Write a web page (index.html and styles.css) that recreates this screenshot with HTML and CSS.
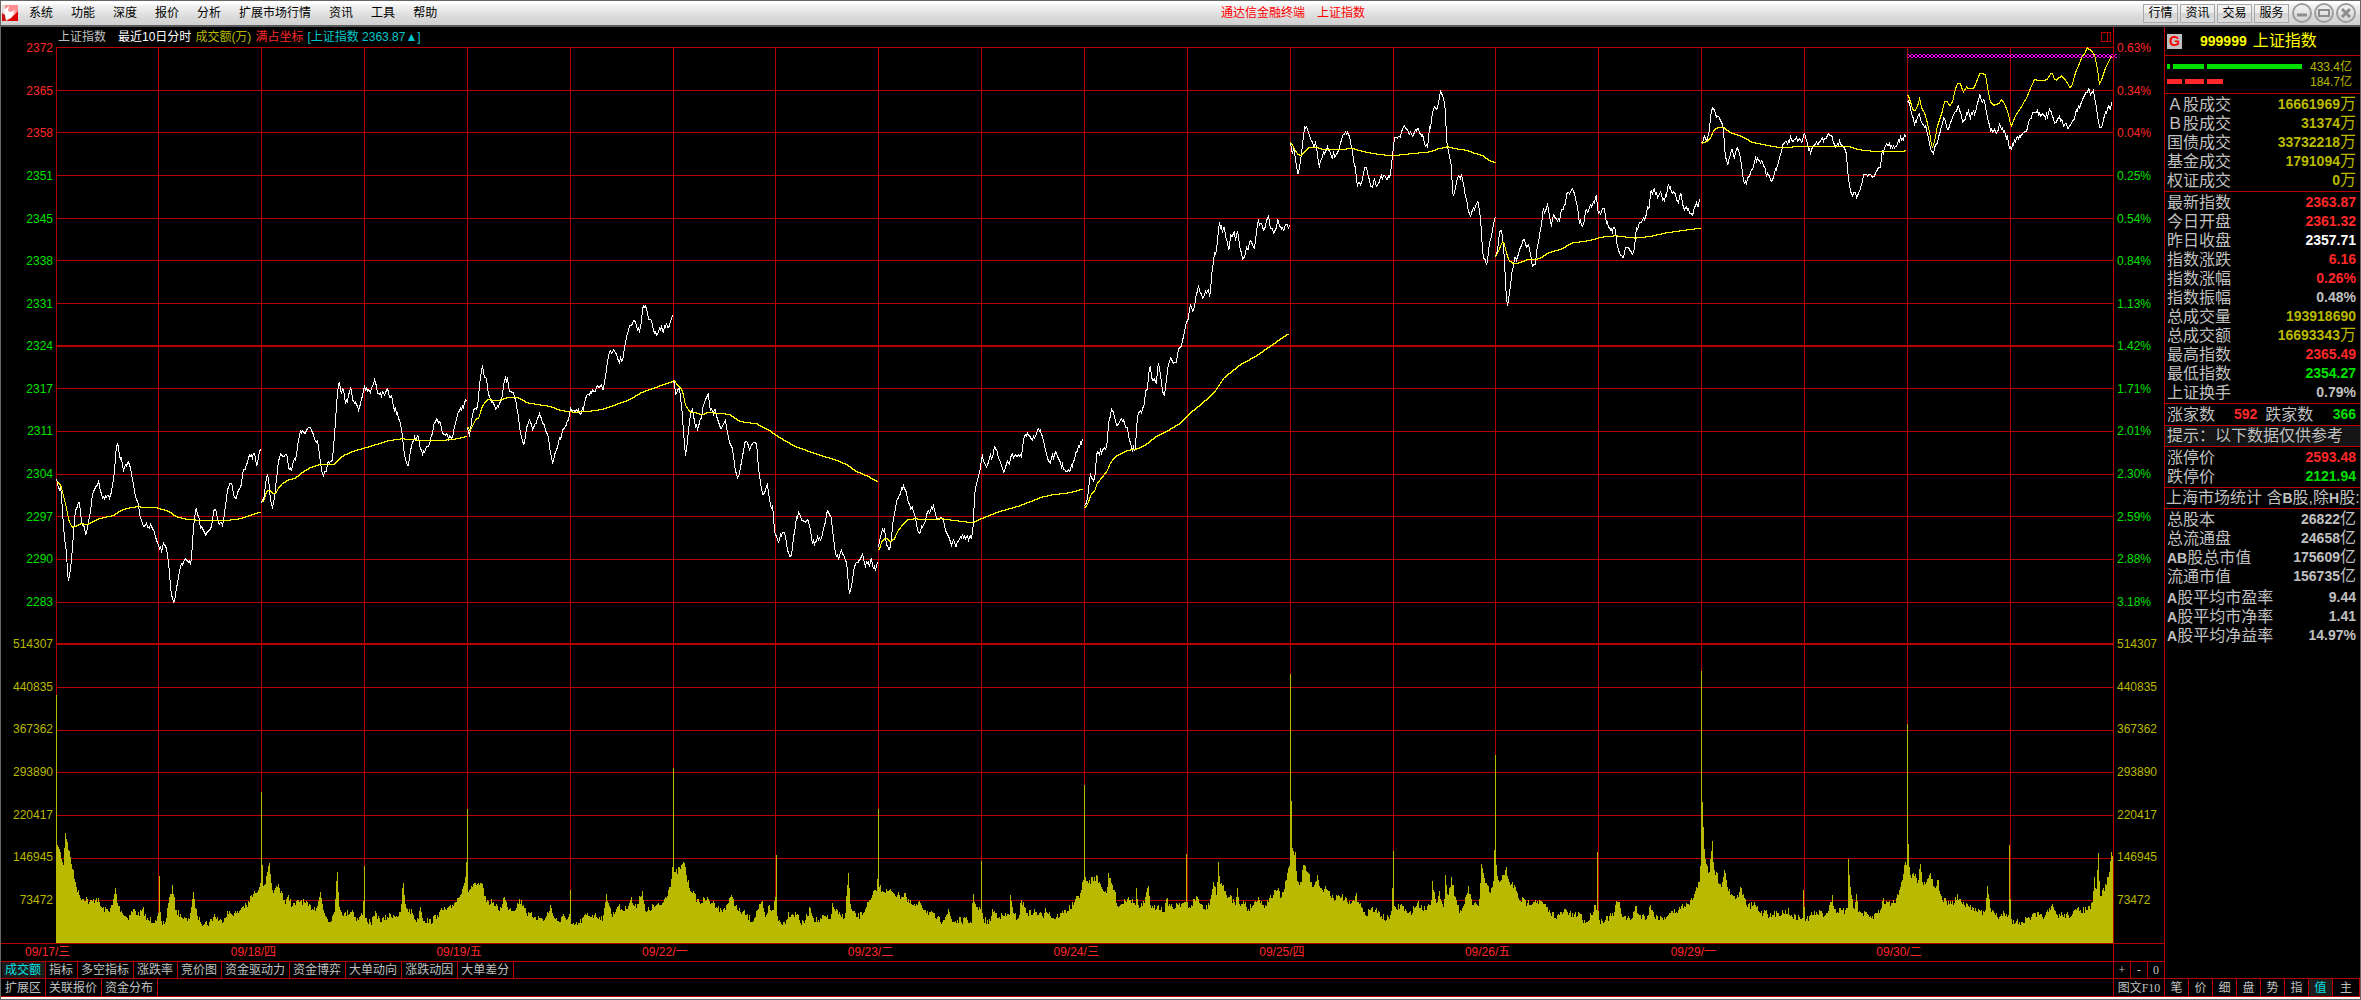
FILE: index.html
```html
<!DOCTYPE html>
<html lang="zh-CN">
<head>
<meta charset="utf-8">
<title>通达信金融终端 上证指数</title>
<link rel="stylesheet" href="styles.css">
</head>
<body>
<header class="titlebar">
  <svg class="logo" viewBox="0 0 16 16" aria-hidden="true"><rect width="16" height="16" fill="#e8dede"/><path d="M3 0h13v6l-5 3-4-2-4 3z" fill="#ff8f8f"/><path d="M16 6v10H4l5-3z" fill="#e00000"/><path d="M0 8l3 2 1 6H0z" fill="#d01010"/><path d="M2 5l5-4-1 5 3 1 4-2-4 8-5 1z" fill="#fff"/></svg>
  <nav class="menu">
    <button>系统</button><button>功能</button><button>深度</button><button>报价</button><button>分析</button><button>扩展市场行情</button><button>资讯</button><button>工具</button><button>帮助</button>
  </nav>
  <h1 class="caption"><span>通达信金融终端</span><span>上证指数</span></h1>
  <div class="shortcuts"><button>行情</button><button>资讯</button><button>交易</button><button>服务</button></div>
  <div class="window-buttons">
    <button aria-label="最小化"><svg viewBox="0 0 20 20"><circle cx="10" cy="10" r="9"/><path d="M5 12h10" class="bold"/></svg></button>
    <button aria-label="还原"><svg viewBox="0 0 20 20"><circle cx="10" cy="10" r="9"/><path d="M5 7h10v6H5z"/></svg></button>
    <button aria-label="关闭"><svg viewBox="0 0 20 20"><circle cx="10" cy="10" r="9"/><path d="M6 6l8 8M14 6l-8 8" class="bold"/></svg></button>
  </div>
</header>
<main class="desk">
  <section class="workspace">
    <div class="chart">
      <ol class="axis axis-left">
        <li class="up">2372</li><li class="up">2365</li><li class="up">2358</li><li class="down">2351</li><li class="down">2345</li><li class="down">2338</li><li class="down">2331</li><li class="down">2324</li><li class="down">2317</li><li class="down">2311</li><li class="down">2304</li><li class="down">2297</li><li class="down">2290</li><li class="down">2283</li><li>514307</li><li>440835</li><li>367362</li><li>293890</li><li>220417</li><li>146945</li><li>73472</li>
      </ol>
      <div class="plot">
        <div class="legend">
          <span class="name">上证指数</span><span class="period">最近10日分时</span><span class="amount">成交额(万)</span><span class="up">满占坐标</span><span class="quote-tag">[上证指数 2363.87▲]</span>
          <svg class="layout-icon" viewBox="0 0 10 10" aria-hidden="true"><path d="M.5 .5h9v9h-9zM6.500 .5v9"/></svg>
        </div>
        <svg id="canvas" class="canvas" viewBox="56 47 2057 896" preserveAspectRatio="none" role="img" aria-label="最近10日分时走势">
          <defs><pattern id="cross" width="4" height="4" patternUnits="userSpaceOnUse" x="1908" y="54"><path d="M0 0h1v1H0zM3 0h1v1H3zM1 1h2v2H1zM0 3h1v1H0zM3 3h1v1H3z" fill="#ff00ff"/></pattern></defs>
        </svg>
      </div>
      <ol class="axis axis-right">
        <li class="up">0.63%</li><li class="up">0.34%</li><li class="up">0.04%</li><li class="down">0.25%</li><li class="down">0.54%</li><li class="down">0.84%</li><li class="down">1.13%</li><li class="down">1.42%</li><li class="down">1.71%</li><li class="down">2.01%</li><li class="down">2.30%</li><li class="down">2.59%</li><li class="down">2.88%</li><li class="down">3.18%</li><li>514307</li><li>440835</li><li>367362</li><li>293890</li><li>220417</li><li>146945</li><li>73472</li>
      </ol>
    </div>
    <div class="strip dates">
      <ol class="strip-main"><li>09/17/三</li><li>09/18/四</li><li>09/19/五</li><li>09/22/一</li><li>09/23/二</li><li>09/24/三</li><li>09/25/四</li><li>09/26/五</li><li>09/29/一</li><li>09/30/二</li></ol>
      <div class="strip-side"></div>
    </div>
    <div class="strip tabs">
      <nav class="strip-main"><button class="active">成交额</button><button>指标</button><button>多空指标</button><button>涨跌率</button><button>竞价图</button><button>资金驱动力</button><button>资金博弈</button><button>大单动向</button><button>涨跌动因</button><button>大单差分</button></nav>
      <div class="strip-side zoomers"><button>+</button><button>-</button><button>0</button></div>
    </div>
    <div class="strip tabs last">
      <nav class="strip-main"><button>扩展区</button><button>关联报价</button><button>资金分布</button></nav>
      <div class="strip-side zoomers"><button class="info">图文F10</button></div>
    </div>
  </section>
  <aside class="quote">
    <h2 class="security"><span class="flag">G</span><span class="code">999999</span><span>上证指数</span></h2>
    <div class="flows block">
      <div class="flow green"><i class="seg s3"></i><i class="seg s31"></i><i class="seg s95"></i><span>433.4亿</span></div>
      <div class="flow red"><i class="seg s15"></i><i class="seg s19"></i><i class="seg s16"></i><span>184.7亿</span></div>
    </div>
    <div class="block">
    <table>
      <tr><th>Ａ股成交</th><td class="amount">16661969<em>万</em></td></tr>
      <tr><th>Ｂ股成交</th><td class="amount">31374<em>万</em></td></tr>
      <tr><th>国债成交</th><td class="amount">33732218<em>万</em></td></tr>
      <tr><th>基金成交</th><td class="amount">1791094<em>万</em></td></tr>
      <tr><th>权证成交</th><td class="amount">0<em>万</em></td></tr>
    </table>
    </div>
    <div class="block">
    <table>
      <tr><th>最新指数</th><td class="up">2363.87</td></tr>
      <tr><th>今日开盘</th><td class="up">2361.32</td></tr>
      <tr><th>昨日收盘</th><td class="flat">2357.71</td></tr>
      <tr><th>指数涨跌</th><td class="up">6.16</td></tr>
      <tr><th>指数涨幅</th><td class="up">0.26%</td></tr>
      <tr><th>指数振幅</th><td>0.48%</td></tr>
      <tr><th>总成交量</th><td class="amount">193918690</td></tr>
      <tr><th>总成交额</th><td class="amount">16693343<em>万</em></td></tr>
      <tr><th>最高指数</th><td class="up">2365.49</td></tr>
      <tr><th>最低指数</th><td class="down">2354.27</td></tr>
      <tr><th>上证换手</th><td>0.79%</td></tr>
    </table>
    </div>
    <div class="block">
    <table>
      <tr><th>涨家数</th><td class="up">592</td><th class="second">跌家数</th><td class="down">366</td></tr>
    </table>
    </div>
    <p class="block note">提示：以下数据仅供参考</p>
    <div class="block">
    <table>
      <tr><th>涨停价</th><td class="up">2593.48</td></tr>
      <tr><th>跌停价</th><td class="down">2121.94</td></tr>
    </table>
    </div>
    <h3 class="block market">上海市场统计 含<b>B</b>股,除<b>H</b>股:</h3>
    <div class="block totals">
    <table>
      <tr><th>总股本</th><td>26822<em>亿</em></td></tr>
      <tr><th>总流通盘</th><td>24658<em>亿</em></td></tr>
      <tr><th><b>AB</b>股总市值</th><td>175609<em>亿</em></td></tr>
      <tr><th>流通市值</th><td>156735<em>亿</em></td></tr>
    </table>
    <table>
      <tr><th><b>A</b>股平均市盈率</th><td>9.44</td></tr>
      <tr><th><b>A</b>股平均市净率</th><td>1.41</td></tr>
      <tr><th><b>A</b>股平均净益率</th><td>14.97%</td></tr>
    </table>
    </div>
    <nav class="views"><button>笔</button><button>价</button><button>细</button><button>盘</button><button>势</button><button>指</button><button class="active">值</button><button>主</button></nav>
  </aside>
</main>
<script src="chart.js"></script>
</body>
</html>
```

FILE: styles.css
```css
* { box-sizing: border-box; }

:root {
  --line: #b80000;
  --up: #ff2828;
  --down: #00e000;
  --amount: #b9b900;
  --text: #c0c0c0;
  --cyan: #00c8c8;
}

body {
  margin: 0;
  height: 100vh;
  display: flex;
  flex-direction: column;
  border: 1px solid #666;
  background: #000;
  color: var(--text);
  font: 12px/16px "Liberation Sans", "Noto Sans CJK SC", sans-serif;
}

h1, h2, h3, p, ol { margin: 0; padding: 0; font-size: inherit; font-weight: normal; list-style: none; }

button {
  margin: 0;
  padding: 0;
  border: 0;
  background: none;
  color: inherit;
  font: inherit;
  white-space: nowrap;
}

.up { color: var(--up); }
.down { color: var(--down); }
.amount { color: var(--amount); }
.flat { color: #fff; }

/* Title bar */
.titlebar {
  flex: none;
  height: 26px;
  display: flex;
  align-items: center;
  padding-left: 1px;
  border-bottom: 2px solid #5a5a5a;
  background: linear-gradient(#fff 0, #fff 3px, #f2f2f2 4px, #e8e8e8 10px, #dcdcdc 15px, #d0d0d0 24px);
  color: #000;
}
.logo { width: 16px; height: 16px; }
.menu { display: flex; gap: 18px; padding-left: 11px; }
.caption { flex: 1; display: flex; justify-content: center; gap: 12px; padding-left: 6px; color: #f00; }
.shortcuts { display: flex; gap: 2px; }
.shortcuts button {
  width: 35px;
  height: 19px;
  border: 1px solid #a8a8a8;
  background: linear-gradient(#f4f4f4, #ececec 45%, #d4d4d4 50%, #dcdcdc);
}
.window-buttons { display: flex; gap: 2px; padding: 0 4px 0 3px; }
.window-buttons button { width: 20px; height: 20px; }
.window-buttons svg { display: block; fill: none; stroke: #8c8c8c; stroke-width: 2; }
.window-buttons .bold { stroke-width: 3; }
.window-buttons circle { stroke: #9c9c9c; }

/* Chart area */
.desk { flex: 1; min-height: 0; display: flex; border-bottom: 2px solid #fff; }
.workspace { flex: 1; min-width: 0; display: flex; flex-direction: column; border-bottom: 1px solid var(--line); }
.chart { flex: 1; min-height: 0; display: grid; grid-template-columns: 55px 1fr 51px; }
.axis { display: grid; grid-template-rows: repeat(21, 1fr); align-items: center; padding-bottom: 22px; color: var(--amount); }
.axis-left { padding-right: 3px; text-align: right; }
.axis-right { padding-left: 3px; border-left: 1px solid var(--line); }
.plot { min-width: 0; min-height: 0; display: flex; flex-direction: column; }
.legend { flex: none; height: 20px; display: flex; align-items: center; gap: 4px; padding: 0 2px; }
.legend .name { padding-right: 8px; }
.legend .period { color: #fff; }
.quote-tag { color: var(--cyan); }
.layout-icon { width: 10px; height: 10px; margin-left: auto; fill: none; stroke: var(--line); shape-rendering: crispEdges; }
.canvas { display: block; width: 100%; flex: 1; min-height: 0; overflow: visible; shape-rendering: crispEdges; fill: none; }
.canvas path { vector-effect: non-scaling-stroke; }
.grid-line { stroke: var(--line); stroke-width: 1; }
.grid-line.major { stroke-width: 2; }
.price { stroke: #fff; }
.average { stroke: #ff0; }
.volume { fill: var(--amount); }

/* Strips under the chart */
.strip { flex: none; height: 17px; display: flex; border-top: 1px solid var(--line); }
.strip.dates, .strip.last { height: 18px; }
.strip-main { flex: 1; display: flex; }
.strip-side { width: 51px; border-left: 1px solid var(--line); }
.dates { color: var(--up); }
.dates .strip-main { padding: 0 31px 0 24px; }
.dates li { flex: 1; }
.tabs .strip-main { padding-left: 1px; }
.tabs .strip-main button { padding: 0 4px 0 3px; border-right: 1px solid var(--line); }
.tabs .active, .views .active { background: #1c1c1c; color: #00e0e0; }
.zoomers { display: flex; font-family: "Liberation Serif", "Noto Sans CJK SC", serif; }
.zoomers button { flex: 1; }
.zoomers button + button { border-left: 1px solid var(--line); }

/* Quote panel */
.quote {
  flex: none;
  width: 196px;
  display: flex;
  flex-direction: column;
  border-left: 1px solid var(--line);
  border-bottom: 1px solid var(--line);
  font-size: 16px;
  overflow: hidden;
}
.block { border-top: 1px solid var(--line); }
.security { height: 28px; display: flex; align-items: center; padding-left: 2px; color: #ff0; }
.security .flag { width: 15px; height: 15px; margin-right: 18px; background: #c0c0c0; color: #f00; font: bold 14px/15px "Liberation Sans", sans-serif; text-align: center; }
.security .code { margin-right: 6px; font-size: 14px; font-weight: bold; }
.flows { height: 38px; padding: 3px 8px 3px 2px; color: var(--amount); font-size: 12px; }
.flow { display: flex; align-items: center; gap: 3px; height: 15px; }
.flow span { margin-left: auto; }
.seg { height: 5px; }
.green .seg { background: var(--down); }
.red .seg { background: var(--up); }
.s3 { width: 3px; }
.s15 { width: 15px; }
.s16 { width: 16px; }
.s19 { width: 19px; }
.s31 { width: 31px; }
.s95 { width: 95px; }
.quote table { width: 100%; border-spacing: 0; margin: 1px 0; }
.quote tr { height: 19px; }
.quote th, .quote td { padding: 0; line-height: 19px; white-space: nowrap; }
.quote th { padding-left: 2px; font-weight: normal; text-align: left; }
.quote td { padding-right: 4px; font-size: 14px; font-weight: bold; text-align: right; }
.quote em { font-size: 16px; font-style: normal; font-weight: normal; line-height: 16px; }
.quote b { font-size: 14px; line-height: 14px; }
.note { height: 21px; padding-left: 2px; background: #141414; line-height: 20px; }
.market { height: 21px; padding-left: 1px; line-height: 20px; white-space: nowrap; }
.quote .second { padding-left: 4px; }
.totals { flex: 1; }
.totals table + table { margin-top: 2px; }
.views { flex: none; height: 18px; display: flex; border-top: 1px solid var(--line); font-size: 12px; }
.views button { width: 24px; border-right: 1px solid var(--line); }
.views button:last-child { flex: 1; }
```

FILE: chart.js
```js
// Ten-day intraday chart: each trace is a list of "x,y" samples with its own origin and scale.
const canvas = document.getElementById('canvas');
const NS = 'http://www.w3.org/2000/svg';

let seed = 7;
function random() {
  seed = (seed * 16807) % 2147483647;
  return seed / 2147483647 - 0.5;
}

function draw(className, d) {
  const path = document.createElementNS(NS, 'path');
  path.setAttribute('class', className);
  path.setAttribute('d', d);
  canvas.appendChild(path);
}

function parse(text, ox, oy, sx) {
  return text.trim().split(/\s+/).map(pair => {
    const [x, y] = pair.split(',').map(Number);
    return [ox + x / sx, oy + y / 3];
  });
}

function sample(points, x) {
  let i = 1;
  while (i < points.length - 1 && points[i][0] < x) i++;
  const [x0, y0] = points[i - 1], [x1, y1] = points[i];
  return y0 + (y1 - y0) * Math.min(1, Math.max(0, (x - x0) / (x1 - x0)));
}

function line(className, points, jitter) {
  const out = [];
  const end = points[points.length - 1][0];
  for (let x = Math.floor(points[0][0]); x <= end; x++) {
    out.push((x + 0.5) + ' ' + Math.round(sample(points, x) + random() * jitter));
  }
  draw(className, 'M' + out.join('L'));
}

for (let i = 0; i < 21; i++) {
  const y = 47 + Math.round(i * 42.67);
  if (i === 7 || i === 14) draw('grid-line major', 'M56 ' + y + 'H2113');
  else draw('grid-line', 'M56 ' + (y + 0.5) + 'H2113');
}
for (let i = 0; i < 20; i++) {
  draw('grid-line', 'M' + (Math.floor(56 + i * 102.85) + 0.5) + ' 47V943');
}

const A = [40, 380, 2.376], B = [640, 280, 2.376], C = [1200, 40, 3], D = [1680, 30, 3];

const volume = [
  ...parse(`111,235 112,675 118,697 124,740 128,640 132,665 138,712 145,765 150,800 158,835 170,835 175,850 190,835 200,865 210,872 220,860 227,805 230,850 240,880 250,895 262,868 270,885 282,870 287,900 305,900 311,890 313,768 315,915 325,905 330,850 338,802 345,870 355,890 370,905 379,823 383,865 392,905 410,910 420,885 433,905 445,880 465,880 475,860 485,860 490,835 500,820 511,790 513,515 515,800 522,780 528,735 532,800 537,820 545,795 553,820 560,855 566,825 572,860 590,840 605,860 620,865 628,818 634,870 645,905 655,880 661,757 665,860 675,885 690,870 700,900 712,880 714,738 716,895 727,910 737,880 745,905 765,885 785,885 790,790 795,860 808,880 818,905 824,860 828,895 843,905 858,885 868,870 880,870 890,850 900,830 910,790 914,770 916,567 918,815 925,800 940,795 948,805 952,840 965,850 980,870 988,832 995,860 1010,870 1018,840 1027,855 1035,885 1050,890 1068,900 1079,860 1087,895 1098,905 1105,890 1116,895 1118,810 1120,920 1135,910 1150,885 1165,885 1183,895 1189,823 1200,890 1210,860 1225,870 1237,835 1245,865 1259,812 1265,880 1280,860 1297,855 1305,830 1313,800 1318,760 1320,445 1322,765 1330,750 1342,730 1348,785 1358,820 1370,845 1385,840 1400,850 1415,875 1435,830 1445,870 1460,880 1475,905 1485,870 1495,850 1500,900 1507,860 1515,870 1520,835 1522,705 1524,900 1538,910 1545,880 1565,885`, 0, 620, 1.96),
  ...parse(`42,915 50,900 60,863 65,895 78,905 85,890 98,900 103,858 118,890 128,885 134,760 139,870 150,890 160,885 170,860 180,835 191,795 193,567 195,800 205,815 220,815 235,830 245,820 250,845 265,860 275,850 285,870 300,885 315,905 331,875 338,905 365,900 375,910 379,822 385,865 393,870 395,723 397,895 410,910 417,870 430,890 450,885 452,826 457,885 468,895 473,840 485,880 500,875 515,890 521,865 535,895 555,880 575,855 590,815 595,780 597,495 599,795 610,780 620,770 630,800 640,820 644,768 655,810 663,860 683,830 697,855 699,805 703,865 715,850 722,797 728,870 742,855 752,875 758,838 770,870 778,850 795,850 797,702 799,870 818,830 830,870 842,855 850,785 856,830 859,727 864,800 870,795 878,845 883,825 892,855 897,805 902,860 912,845 915,870 930,850 937,830 948,860 960,835 975,810 983,830 990,800 997,745 999,740 1001,162 1003,655 1006,700 1010,695 1013,770 1020,795 1027,735 1035,760 1045,800 1053,770 1063,815 1070,800 1085,835 1100,830 1118,855 1130,830 1137,850 1145,885 1160,865 1175,880 1188,900 1196,890 1200,850 1202,693 1204,870 1218,855 1232,885 1250,850 1265,870 1277,840 1279,784 1287,860 1293,820 1302,860 1304,765 1310,835 1316,772 1325,840 1336,885 1345,825 1350,805 1357,855 1370,860 1375,733 1382,790 1393,820 1400,775 1402,405 1404,740 1408,780 1420,770 1424,742 1428,785 1440,800 1448,835 1465,850 1480,840 1495,850 1510,880 1525,890 1540,870 1555,890 1566,880`, 780, 620, 1.96),
  ...parse(`52,880 60,900 70,908 82,885 92,855 96,870 98,697 101,905 125,895 143,880 148,843 155,855 165,890 185,900 199,860 207,885 228,890 237,855 245,885 265,895 290,880 310,870 330,850 345,840 358,805 367,770 370,153 373,665 375,625 378,700 390,760 398,663 403,750 412,770 420,800 430,750 438,800 450,825 460,835 474,805 483,840 490,860 510,855 525,880 540,870 547,890 570,880 597,873 607,890 634,895 637,810 640,905 655,885 680,877 695,885 712,832 718,870 751,875 754,717 760,810 768,870 774,823 780,875 800,885 815,895 828,880 838,870 842,843 865,850 878,840 890,800 902,725 906,750 908,312 911,720 917,770 925,760 935,790 942,733 947,785 957,785 968,760 978,800 990,785 994,830 1010,845 1030,850 1038,826 1050,850 1065,860 1085,865 1100,875 1110,885 1117,798 1125,870 1140,880 1146,900 1160,875 1172,885 1175,675 1178,905 1200,905 1220,900 1240,885 1265,890 1289,860 1297,885 1330,885 1355,870 1375,870 1392,855 1397,771 1401,835 1407,700 1411,830 1425,800 1435,760 1442,697 1445,735`, 1560, 620, 2.613)
];
let bars = 'M56 943';
for (let x = 56; x < 2113; x++) {
  let y = sample(volume, x + 0.5) + random() * 7;
  for (const [px, py] of volume) if (px >= x && px < x + 1) y = Math.min(y, py);
  bars += 'V' + Math.round(y) + 'H' + (x + 1);
}
draw('volume', bars + 'V943Z');

const prices = [
  parse(`39,300 42,318 48,325 52,390 55,440 58,485 62,520 64,580 67,600 71,570 75,520 79,440 83,395 87,375 93,366 97,420 103,440 108,462 113,430 118,405 123,350 128,320 138,310 145,345 151,360 158,345 164,355 172,310 178,240 179,195 183,187 188,225 193,240 197,266 206,255 212,250 218,300 224,340 232,375 238,410 244,447 249,425 255,445 263,435 270,455 276,480 282,500 289,512 294,487 300,515 306,575 310,640 317,673 322,630 326,610 330,570 337,550 343,535 350,545 357,555 362,480 365,420 369,382 376,410 381,445 386,450 392,472 398,455 406,440 411,400 415,382 421,420 432,430 436,420 440,370 446,320 450,304 455,320 459,350 464,360 470,330 477,315 481,280 488,260 494,235 500,225 503,235 507,205 510,240 515,255 519,220 525,205`, ...A),
  parse(`527,363 531,363 535,310 538,282 542,300 546,360 551,385 556,350 560,310 565,240 568,228 585,225 590,265 593,260 595,278 600,245 607,235 612,190 617,155 630,155 636,135 642,145 648,160 653,178 660,190 665,240 670,290 677,280 683,250 688,240 694,238 699,150 704,60 709,3 715,40 719,20 724,72 729,60 737,20 743,70 748,60 756,85 762,60 769,22 778,35 785,35 795,-3 801,35 808,38 816,45 824,22 829,45 834,50 840,80 849,105 856,130 862,190 866,240 873,258 879,210 884,180 890,175 896,165 903,205 909,220 917,205 925,185 931,160 937,118 944,128 951,130 957,165 963,165 970,175 979,175 985,130 992,100 998,88 1006,80 1013,55`, ...A),
  [...parse(`1015,150 1020,165 1027,100 1033,85 1040,75 1043,10 1047,-20 1050,-40 1054,-10 1060,5 1065,40 1070,60 1075,65 1082,88 1088,75 1095,60 1100,20 1105,-5 1110,-5 1113,40 1122,35 1130,60 1136,120 1141,170 1146,190 1152,180 1155,140 1161,120 1170,150 1178,125 1186,108 1192,125 1200,150 1206,160 1211,220 1216,245 1222,225 1228,205 1233,180 1240,160 1248,135 1256,115 1260,85 1268,92 1275,85 1283,100 1290,88 1296,45 1305,42 1315,32 1325,22 1332,20 1337,28 1341,0 1350,-80 1362,-95 1373,-58 1382,-60 1390,-110 1400,-165 1412,-180 1420,-150`, ...A), ...parse(`0,148 6,70 15,90 18,110 27,118 33,155 38,172 45,140 54,155 62,128 68,150 72,118 78,100`, ...B)],
  parse(`79,305 83,335 88,340 92,325 96,360 100,420 103,470 107,525 111,490 115,440 119,400 124,390 129,430 135,445 140,430 145,410 150,370 155,347 161,345 166,390 172,400 177,388 182,410 188,435 195,445 202,425 207,465 214,490 220,520 226,575 232,592 238,560 244,520 249,482 254,490 260,505 265,488 276,487 280,560 285,610 291,642 296,635 301,608 307,660 310,690 313,665 318,750 326,785 332,770 343,755 349,810 357,835 362,790 367,745 372,710 377,695 383,725 388,730 393,717 402,735 406,780 413,790 420,775 431,775 437,740 441,710 446,692 453,715 458,770 463,820 472,830 476,815 485,830 490,850 493,900 496,942 502,920 506,875 512,855 520,838 528,820 534,850 540,845 545,858 548,835 553,862 560,868 565,835`, ...B),
  parse(`567,800 571,770 575,745 580,755 584,790 590,812 594,805 598,750 604,690 610,655 617,640 622,622 629,620 635,655 642,685 648,690 653,715 658,745 662,768 668,735 676,735 681,700 690,690 698,683 704,710 712,713 720,720 725,760 732,775 738,790 744,787 750,798 757,775 765,768 775,778 787,770 791,740 793,650 797,615 802,585 808,565 811,525 815,545 822,555 828,545 832,520 835,545 841,505 849,520 855,550 863,575 870,548 876,548 881,522 888,530 898,525 906,535 909,485 915,463 922,460 928,480 936,470 941,458 947,445 954,470 958,475 963,515 970,550 978,535 987,520 995,545 1003,560 1010,580 1020,573 1028,550 1035,515 1042,500 1048,490 1052,468`, ...B),
  [...parse(`1056,685 1062,650 1068,590 1072,600 1077,600 1081,580 1083,520 1090,520 1096,510 1105,505 1109,485 1111,440 1116,405 1120,385 1125,400 1130,430 1136,440 1142,412 1150,430 1156,445 1160,465 1166,500 1171,508 1176,505 1179,430 1184,395 1190,400 1196,380 1200,340 1205,325 1208,270 1211,260 1215,300 1222,300 1226,312 1229,250 1235,275 1239,320 1244,350 1250,300 1255,250 1260,230 1266,245 1272,250 1278,215 1285,200 1290,175 1296,130 1302,110 1306,72 1312,98 1320,50 1325,18 1330,35 1336,60 1342,35 1350,35 1354,45`, ...B), ...parse(`32,720 36,680 41,645 48,635 52,600 56,552 62,560 66,575 70,555 75,590 80,605 85,635 90,590 98,590 102,580 105,605 110,575 115,600 120,630 128,660 133,655 137,625 142,635 147,600 152,600 158,615 161,625 166,600 172,550 180,547 190,565 196,550 203,525 208,550 213,570 219,575 227,560 233,540 237,560 250,565 257,550 262,560 269,555`, ...C)],
  parse(`271,315 277,340 281,320 286,365 293,402 298,375 304,340 308,290 313,262 321,265 327,285 334,310 341,325 346,310 351,350 356,378 363,355 370,340 381,325 390,340 396,350 400,335 404,352 412,335 420,305 428,290 435,275 445,280 452,310 458,350 466,390 470,435 483,430 488,405 496,380 504,405 510,430 515,442 521,420 532,440 540,408 547,412 552,405 562,420 570,395 576,345 582,300 588,290 600,290 606,270 613,265 628,275 637,280 645,275 652,262 658,280 665,282 673,310 682,320 686,270 692,250 697,215 702,200 710,200 715,185 721,152 726,170 733,190 736,230 737,290 742,320 748,350 753,380 756,455 760,470 767,435 772,405 778,420 784,400 790,430 795,465 802,500 808,530 815,515 823,500 830,490 836,500 841,540 845,620 849,655 858,670 862,655 866,620 873,585 880,550 886,527`, ...C),
  [...parse(`887,650 892,620 896,580 901,562 906,590 910,620 914,710 917,765 920,800 925,770 930,735 936,690 942,655 950,660 955,635 962,610 965,620 970,592 976,620 985,620 989,645 997,680 1004,675 1010,620 1016,590 1022,560 1028,510 1036,512 1042,498 1048,530 1054,560 1059,525 1065,530 1070,535 1078,540 1086,500 1093,500 1099,460 1105,462 1115,445 1123,460 1130,495 1137,545 1145,560 1152,540 1155,515 1162,515 1169,500 1176,495 1183,480 1189,465 1192,530 1199,515 1206,510 1212,505 1217,545 1227,560 1236,570 1243,565 1247,590 1250,620 1259,650 1269,652 1274,620 1285,625 1300,640 1306,575 1317,545 1332,535 1340,510 1347,495 1352,440 1355,475 1359,445 1366,460 1373,475 1379,455 1388,485 1397,465 1405,435 1413,455 1425,465 1434,490`, ...C), ...parse(`0,490 5,510 8,535 13,540 18,530 25,545 33,553 38,550 42,525 48,520 55,530 59,500`, ...D)],
  parse(`65,340 72,325 80,335 86,310 90,260 94,235 98,230 104,240 109,265 115,260 121,275 128,285 131,335 136,390 143,400 150,370 155,358 162,380 170,350 178,370 183,410 188,450 197,462 204,440 210,425 218,410 224,380 232,390 238,400 243,390 250,405 258,435 268,440 277,450 283,425 290,410 298,385 306,355 315,330 322,340 330,325 340,335 350,325 363,330 372,315 380,335 388,370 396,350 405,345 415,335 430,325 445,315 455,312 461,345 470,345 480,335 487,350 498,370 502,430 508,470 512,500 518,500 524,485 529,505 537,490 543,465 548,440 560,435 568,430 575,440 582,440 590,420 600,410 605,370 613,355 625,340 635,355 645,345 655,332 668,325 677,315`, ...D),
  parse(`683,210 690,235 695,260 702,278 712,265 718,258 725,275 733,290 741,310 748,345 757,372 763,350 773,330 780,300 787,275 793,258 797,290 804,295 812,275 820,250 827,238 833,225 840,245 846,270 855,260 862,245 870,258 878,240 884,250 890,220 898,195 903,215 912,212 917,235 922,275 930,300 940,300 950,310 957,280 965,300 975,315 983,325 985,350 991,360 998,345 1006,330 1018,320 1035,305 1042,285 1050,265 1060,245 1070,245 1076,255 1085,250 1098,258 1109,238 1115,260 1125,280 1138,262 1148,285 1155,280 1164,292 1178,275 1184,255 1193,235 1205,215 1213,200 1225,180 1230,195 1238,182 1243,205 1248,230 1252,270 1257,298 1264,290 1272,260 1280,240 1285,230 1290,240 1295,203`, ...D)
];

const averages = [
  parse(`39,305 48,315 55,350 62,385 67,420 75,440 85,437 97,430 112,432 125,425 140,415 160,409 176,405 188,393 205,384 230,379 275,382 305,393 320,408 340,415 380,420 435,421 475,415 500,405 525,394`, ...A),
  parse(`527,363 531,363 537,335 543,328 550,338 558,341 565,325 575,310 590,299 608,292 625,275 640,263 665,252 698,253 710,236 725,223 745,212 770,203 800,192 830,180 860,175 885,178 925,181 975,178 995,174 1013,168`, ...A),
  parse(`1015,140 1020,153 1028,135 1035,118 1042,112 1050,78 1063,58 1090,60 1110,52 1135,52 1155,67 1180,72 1210,78 1235,90 1265,95 1295,94 1335,87 1370,72 1400,58 1430,36 1465,20 1503,3`, ...A),
  parse(`79,300 88,315 97,325 102,345 107,375 117,395 130,397 147,403 160,397 190,398 212,403 235,423 275,430 305,450 325,468 365,497 400,513 430,526 460,537 490,553 510,572 535,585 565,605`, ...B),
  parse(`567,810 573,785 582,773 594,784 603,777 610,757 622,735 635,718 652,715 680,718 715,715 750,721 790,727 812,714 850,695 900,677 955,650 980,643 1020,637 1052,626`, ...B),
  parse(`1056,685 1065,665 1070,645 1080,630 1085,610 1108,575 1117,548 1130,528 1160,509 1177,507 1200,495 1225,470 1255,450 1285,428 1310,395 1335,370 1365,335 1387,293 1425,254 1465,226 1500,195 1541,160`, ...B),
  parse(`271,307 280,323 290,340 302,347 315,333 328,320 345,320 370,328 410,328 455,324 490,334 535,342 575,346 620,341 690,334 715,325 742,319 765,325 795,329 820,338 845,345 865,360 885,368`, ...C),
  parse(`886,650 896,630 905,606 912,612 918,640 926,662 940,670 960,667 985,656 1010,657 1025,651 1045,637 1080,627 1120,607 1170,600 1205,590 1245,586 1305,593 1350,588 1400,577 1450,570 1500,563`, ...C),
  parse(`65,338 78,334 90,325 100,300 110,293 128,290 145,305 180,317 215,336 260,345 300,352 345,349 430,349 500,347 530,357 590,364 655,364 677,361`, ...D),
  parse(`683,195 690,215 697,240 706,240 712,225 718,205 724,235 732,250 740,275 748,310 754,352 758,350 765,320 770,290 780,260 787,240 790,220 797,211 808,226 817,215 824,180 832,158 839,160 848,187 858,172 865,175 880,175 888,155 898,130 905,128 915,135 921,170 930,215 938,225 955,220 964,210 973,222 983,250 992,290 1005,258 1020,235 1040,200 1050,175 1062,148 1080,150 1100,148 1115,125 1120,145 1128,150 1142,138 1155,150 1168,172 1175,165 1184,130 1195,105 1205,80 1213,72 1220,53 1232,62 1242,75 1250,110 1257,162 1265,145 1275,115 1285,95 1295,75`, ...D)
];

prices.forEach(points => line('price', points, 5));

// Reference marker across the last session, under the average line.
const marker = document.createElementNS(NS, 'rect');
Object.entries({ x: 1908, y: 54, width: 209, height: 4, fill: 'url(#cross)' }).forEach(([k, v]) => marker.setAttribute(k, v));
canvas.appendChild(marker);

averages.forEach(points => line('average', points, 0));
```
